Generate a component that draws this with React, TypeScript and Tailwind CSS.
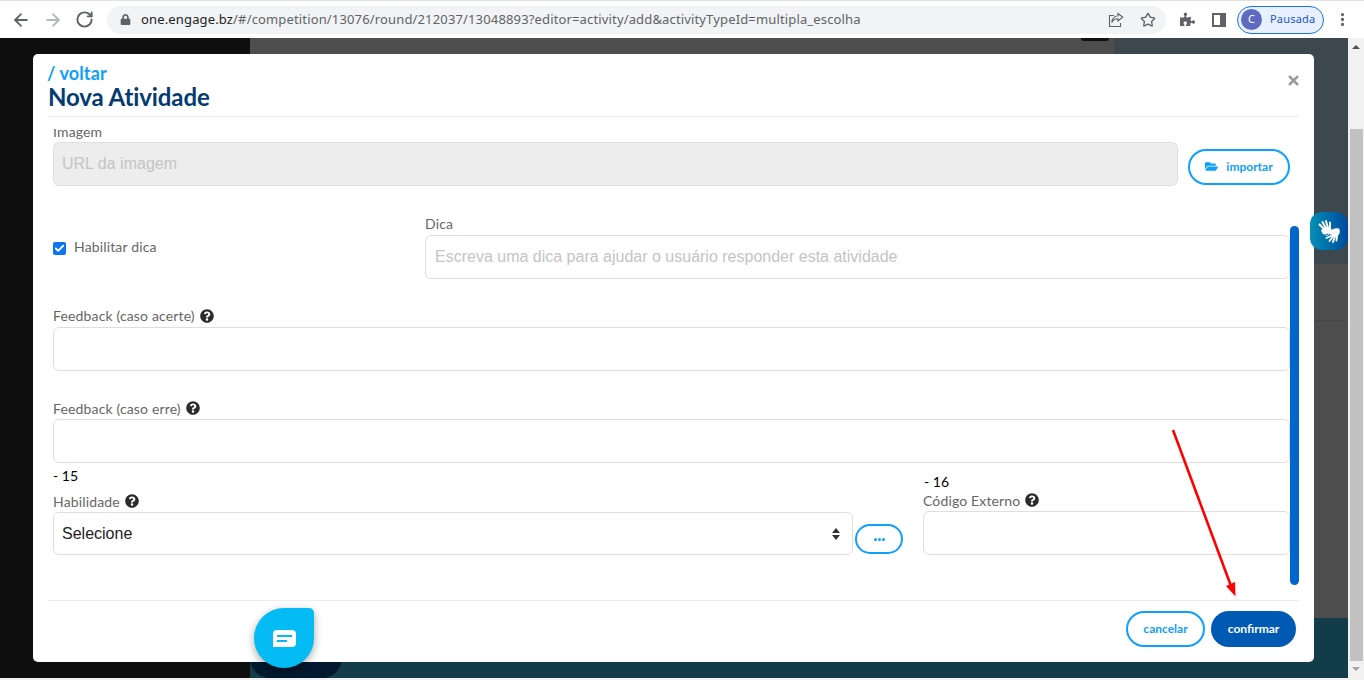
import { ArrowLeft, ArrowRight, RotateCw, Star, MoreVertical, X, Check } from "lucide-react";
import { FaQuestionCircle, FaFolderOpen, FaPuzzlePiece, FaLock } from "react-icons/fa";

function Help() {
  return <FaQuestionCircle className="h-[14px] w-[14px] text-[#2b2b2b]" />;
}

function FieldLabel({ text, help, tall }: { text: string; help?: boolean; tall?: boolean }) {
  return (
    <div className={`flex items-center gap-[5px] pb-[2px] text-[14px] tracking-[0.15px] text-[#666] ${tall ? "h-[21px]" : "h-[20px]"}`}>
      <span>{text}</span>
      {help && <Help />}
    </div>
  );
}

function TextBox({ placeholder }: { placeholder?: string }) {
  return (
    <div className="flex h-[44px] items-center rounded-[6px] border border-[#dedede] bg-white px-[9px] font-['Liberation_Sans',sans-serif] text-[16px] text-[#c4c4c4]">
      {placeholder}
    </div>
  );
}

function PillButton({ children, className }: { children: React.ReactNode; className: string }) {
  return (
    <button type="button" className={`flex items-center justify-center rounded-full text-[12px] font-bold ${className}`}>
      {children}
    </button>
  );
}

function ShareIcon() {
  return (
    <svg className="ml-auto" width="16" height="16" viewBox="0 0 16 16" fill="none" stroke="#5f6368" strokeWidth="1.1">
      <path d="M6 3.5H1.5v11h11v-3.5" />
      <path d="M10 1.5l4.8 3.8L10 9V6.8C7 6.8 5 8 3.8 10.5 4.2 6.8 6.4 4.2 10 3.8z" />
    </svg>
  );
}

function Toolbar() {
  return (
    <div className="flex h-[38px] shrink-0 items-center border-t border-t-[#dee1e6] bg-white pl-[11px]">
      <ArrowLeft className="h-[20px] w-[20px] text-[#5f6368]" strokeWidth={2.2} />
      <ArrowRight className="ml-[12px] h-[20px] w-[20px] text-[#b5b7ba]" strokeWidth={2.2} />
      <RotateCw className="ml-[12px] h-[19px] w-[19px] text-[#5f6368]" strokeWidth={2.4} />
      <div className="ml-[13px] flex h-[28px] w-[1059px] items-center rounded-full bg-[#f1f3f4] pr-[10px] pl-[13px] font-['Noto_Sans',sans-serif]">
        <FaLock className="h-[11px] w-[11px] text-[#5f6368]" />
        <span className="ml-[10px] text-[13px] tracking-[0.15px] text-[#202124]">one.engage.bz</span>
        <span className="text-[13px] tracking-[0.15px] text-[#5f6368]">/#/competition/13076/round/212037/13048893?editor=activity/add&amp;activityTypeId=multipla_escolha</span>
        <ShareIcon />
        <Star className="ml-[16px] h-[16px] w-[16px] text-[#5f6368]" strokeWidth={2} />
      </div>
      <FaPuzzlePiece className="ml-[14px] h-[15px] w-[15px] text-[#5f6368]" />
      <div className="ml-[17px] flex h-[14px] w-[14px] justify-end border-2 border-[#5f6368] bg-white">
        <div className="h-full w-[4px] bg-[#5f6368]" />
      </div>
      <div className="ml-[11px] flex h-[28px] w-[87px] items-center rounded-full border border-[#1a73e8] bg-[#e8f0fe] pl-[3px] font-['Noto_Sans',sans-serif]">
        <div className="flex h-[21px] w-[21px] items-center justify-center rounded-full bg-[#5c6bc0] text-[11px] text-white">C</div>
        <span className="ml-[8px] text-[11px] tracking-[0.2px] text-[#1a56c8]">Pausada</span>
      </div>
      <MoreVertical className="ml-[10px] h-[17px] w-[17px] text-[#5f6368]" strokeWidth={2.6} />
    </div>
  );
}

function Backdrop() {
  return (
    <div className="flex min-h-0 flex-1">
      <div className="w-[250px] bg-[#0f0f0f]" />
      <div className="flex flex-1 flex-col">
        <div className="flex flex-1">
          <div className="relative flex-1 bg-[#4d4d4d]">
            <div className="absolute top-0 right-[5px] h-[3px] w-[28px] rounded-b bg-[#111]" />
          </div>
          <div className="flex w-[234px] flex-col">
            <div className="h-[226px] bg-[#3c474e]" />
            <div className="h-[56px] bg-[#4d4d4d]" />
            <div className="flex-1 border-t border-t-[#454545] bg-[#4d4d4d]" />
          </div>
        </div>
        <div className="h-[60px] bg-[#123c4a]" />
      </div>
      <div className="flex w-[16px] flex-col items-center bg-[#f1f1f1]">
        <div className="mt-[7px] h-0 w-0 border-x-[4px] border-b-[4px] border-x-transparent border-b-[#505050]" />
        <div className="mt-[80px] ml-[1px] w-[13px] flex-1 bg-[#c1c1c1]" />
        <div className="mt-[6px] mb-[7px] h-0 w-0 border-x-[4px] border-t-[4px] border-x-transparent border-t-[#a3a3a3]" />
      </div>
    </div>
  );
}

function Modal() {
  return (
    <div className="absolute top-[54px] left-[33px] flex h-[608px] w-[1281px] flex-col rounded-[5px] bg-white font-['Lato','Noto_Sans',sans-serif]">
      <div className="relative mx-[15px] h-[63px] shrink-0 border-b border-b-[#ececec] pt-[9px]">
        <div className="-ml-[1px] text-[18px] leading-[21px] font-bold tracking-[0.1px] text-[#0ea0ff]">/ voltar</div>
        <div className="-mt-[1px] text-[24px] leading-[28px] font-bold tracking-[-0.1px] text-[#043b72]">Nova Atividade</div>
        <X className="absolute top-[19px] right-[-2px] h-[15px] w-[15px] text-[#9a9a9a]" strokeWidth={4} />
      </div>

      <div className="relative mt-[12px] min-h-0 flex-1 pr-[24px] pl-[20px]">
        <div className="h-full overflow-hidden">
          <div className="mt-[-8px] flex h-[21px] items-center pb-[1px] text-[14px] tracking-[0.15px] text-[#666]">Imagem</div>
          <div className="flex items-center">
            <div className="flex h-[44px] w-[1125px] items-center rounded-[6px] border border-[#dedede] bg-[#ededed] px-[8px] font-['Liberation_Sans',sans-serif] text-[16px] text-[#c4c4c4]">
              URL da imagem
            </div>
            <PillButton className="mt-[5px] ml-[10px] h-[36px] w-[102px] gap-[8px] border-2 border-[#0ea0ff] bg-white text-[#0ea0ff]">
              <FaFolderOpen className="h-[13px] w-[13px]" />
              importar
            </PillButton>
          </div>

          <div className="mt-[28px] flex items-center">
            <div className="flex w-[372px] items-center self-start pt-[22px]">
              <div className="flex h-[13px] w-[13px] items-center justify-center rounded-[2px] bg-[#0a75f0]">
                <Check className="h-[11px] w-[11px] text-white" strokeWidth={4} />
              </div>
              <span className="mb-[4px] ml-[8px] text-[14px] tracking-[0.15px] text-[#666]">Habilitar dica</span>
            </div>
            <div className="flex-1">
              <FieldLabel text="Dica" tall />
              <TextBox placeholder="Escreva uma dica para ajudar o usuário responder esta atividade" />
            </div>
          </div>

          <div className="mt-[27px]">
            <FieldLabel text="Feedback (caso acerte)" help tall />
            <TextBox />
          </div>
          <div className="mt-[28px]">
            <FieldLabel text="Feedback (caso erre)" help />
            <TextBox />
          </div>

          <div className="flex">
            <div className="w-[800px]">
              <div className="h-[22px] pt-[2px] text-[14px] text-black">- 15</div>
              <div className="mt-[7px]">
                <FieldLabel text="Habilidade" help />
              </div>
              <div className="flex h-[43px] items-center justify-between rounded-[6px] border border-[#dedede] bg-white pr-[12px] pl-[8px] font-['Liberation_Sans',sans-serif] text-[16px] text-[#222]">
                Selecione
                <div className="flex flex-col gap-[2px]">
                  <div className="h-0 w-0 border-x-[4px] border-b-[5px] border-x-transparent border-b-[#333]" />
                  <div className="h-0 w-0 border-x-[4px] border-t-[5px] border-x-transparent border-t-[#333]" />
                </div>
              </div>
            </div>
            <PillButton className="mt-[61px] ml-[2px] h-[30px] w-[48px] gap-[1px] border-2 border-[#0ea0ff] bg-white">
              <span className="h-[3px] w-[3px] rounded-full bg-[#0ea0ff]" />
              <span className="h-[3px] w-[3px] rounded-full bg-[#0ea0ff]" />
              <span className="h-[3px] w-[3px] rounded-full bg-[#0ea0ff]" />
            </PillButton>
            <div className="ml-[20px] flex-1">
              <div className="h-[22px] pt-[9px] pl-[1px] text-[14px] leading-[20px] text-black">- 16</div>
              <div className="mt-[6px]">
                <FieldLabel text="Código Externo" help />
              </div>
              <TextBox />
            </div>
          </div>
        </div>

        <div className="absolute top-[97px] right-[15px] bottom-[15px] w-[9px] rounded-full bg-[#0066cc]" />
      </div>

      <div className="mx-[15px] flex h-[62px] shrink-0 items-center justify-end gap-[6px] border-t border-t-[#ececec] pr-[3px] pb-[5px]">
        <PillButton className="h-[36px] w-[79px] border-2 border-[#0ea0ff] bg-white text-[#0ea0ff]">cancelar</PillButton>
        <PillButton className="h-[36px] w-[85px] bg-[#0059b3] text-white">confirmar</PillButton>
      </div>
    </div>
  );
}

function HandsIcon() {
  return (
    <svg width="38" height="38" viewBox="0 0 38 38" fill="none" stroke="#fff" strokeLinecap="round">
      <g strokeWidth="1.9">
        <path d="M15 18L9.5 12.5" />
        <path d="M16 16.5L12.5 10" />
        <path d="M18 16L16 9" />
        <path d="M20 16.5L20 10.5" />
      </g>
      <path d="M11 18.5c3-4 7-4.5 10-3l1 5-5 3.5-4-2z" fill="#fff" stroke="none" />
      <path d="M12 22.5c2.5 1 4.5.5 6-.5" stroke="#0a7fb0" strokeWidth="1.2" />
      <path d="M19 20c3-3.5 7-4.5 10-3.5 1.5 2.5 1 5.5-1.5 7.5l-5 1.5z" fill="#fff" stroke="none" />
      <g strokeWidth="1.9">
        <path d="M21 24L16.5 26" />
        <path d="M23 24.5L19.5 29" />
        <path d="M25 24.5L23 30" />
        <path d="M27 23.5L26.5 28.5" />
      </g>
    </svg>
  );
}

export default function App() {
  return (
    <div className="relative flex h-[680px] w-[1364px] flex-col overflow-hidden bg-white">
      <Toolbar />
      <Backdrop />
      <div className="h-[2px] shrink-0 bg-[#f1f1f1]" />

      <div className="absolute top-[648px] left-[250px] h-[30px] w-[92px] rounded-b-[20px] bg-[#02192f]" />
      <Modal />

      <div className="absolute top-[212px] left-[1310px] flex h-[38px] w-[38px] items-center justify-center rounded-[12px] bg-gradient-to-r from-[#0a8fb5] to-[#004a9c]">
        <HandsIcon />
      </div>

      <div className="absolute top-[608px] left-[254px] flex h-[60px] w-[60px] items-center justify-center rounded-t-[30px] rounded-tr-[5px] rounded-b-[30px] bg-[#04bbf3] shadow-[0_3px_8px_rgba(0,0,0,0.35)]">
        <div className="flex h-[17px] w-[23px] flex-col justify-center gap-[3px] rounded-[4px] rounded-bl-none bg-white pl-[4px]">
          <div className="h-[2px] w-[15px] bg-[#04bbf3]" />
          <div className="h-[2px] w-[10px] bg-[#04bbf3]" />
        </div>
      </div>

      <svg className="pointer-events-none absolute top-[428px] left-[1170px]" width="70" height="170" viewBox="0 0 70 170">
        <line x1="3" y1="2" x2="61" y2="158" stroke="#ff0000" strokeWidth="2.6" />
        <polygon points="65.5,168.5 56,158 65,154" fill="#ff0000" />
      </svg>
    </div>
  );
}
